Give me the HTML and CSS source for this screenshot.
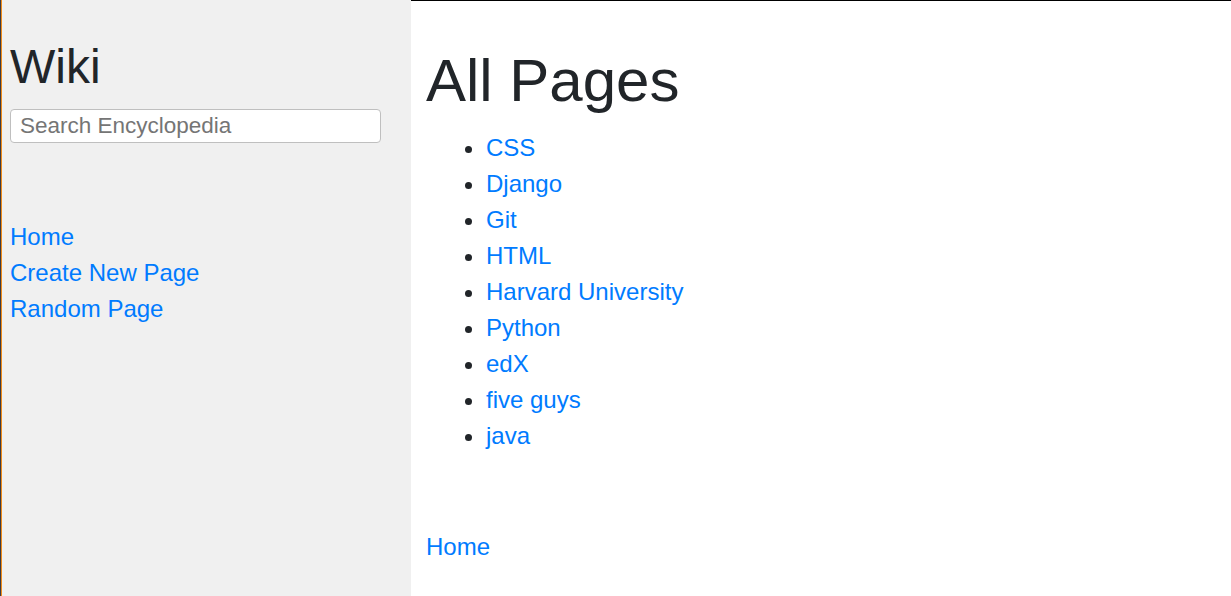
FILE: index.html
```
<!DOCTYPE html>
<html lang="en">
<head>
<meta charset="utf-8">
<title>Encyclopedia</title>
<link rel="stylesheet" href="styles.css">
</head>
<body>
<div class="frame">
  <div class="sidebar">
    <h2 class="brand">Wiki</h2>
    <form class="search-form">
      <input class="search" type="text" name="q" placeholder="Search Encyclopedia">
    </form>
    <div class="nav">
      <div><a href="#">Home</a></div>
      <div><a href="#">Create New Page</a></div>
      <div><a href="#">Random Page</a></div>
    </div>
  </div>
  <div class="main">
    <h1 class="title">All Pages</h1>
    <ul class="pages">
      <li><a href="#">CSS</a></li>
      <li><a href="#">Django</a></li>
      <li><a href="#">Git</a></li>
      <li><a href="#">HTML</a></li>
      <li><a href="#">Harvard University</a></li>
      <li><a href="#">Python</a></li>
      <li><a href="#">edX</a></li>
      <li><a href="#">five guys</a></li>
      <li><a href="#">java</a></li>
    </ul>
    <div class="footer-nav"><a href="#">Home</a></div>
  </div>
</div>
</body>
</html>
```
FILE: styles.css
```
html, body {
  margin: 0;
  padding: 0;
  height: 100%;
}
body {
  font-family: "Liberation Sans", Arial, sans-serif;
  font-size: 24px;
  line-height: 36px;
  color: #212529;
  background: #ffffff;
}
a {
  color: #007bff;
  text-decoration: none;
}
.frame {
  display: flex;
  height: 100vh;
  border-left: 1px solid #3c3c44;
  box-sizing: border-box;
}
.sidebar {
  box-sizing: border-box;
  width: 410px;
  flex: 0 0 410px;
  background: #f0f0f0;
  border-left: 1px solid #f08c1a;
  padding: 38px 30px 0 8px;
}
.brand {
  margin: 0 0 13px 0;
  font-size: 48px;
  font-weight: 400;
  line-height: 57.6px;
}
.search-form {
  margin: 0;
}
.search {
  box-sizing: border-box;
  display: block;
  width: 100%;
  height: 34px;
  margin: 0;
  padding: 1px 9px 0 9px;
  font-family: "Liberation Sans", Arial, sans-serif;
  font-size: 22.5px;
  line-height: 22.5px;
  color: #212529;
  background: #ffffff;
  border: 1px solid #bfbfbf;
  border-radius: 4px;
  outline: none;
}
.search::placeholder {
  color: #757575;
}
.nav {
  margin-top: 76px;
}
.main {
  flex: 1 1 auto;
  border-top: 1px solid #000000;
  padding: 44px 15px 0 15px;
}
.title {
  margin: 0 0 13px 0;
  font-size: 60px;
  font-weight: 400;
  line-height: 72px;
}
.pages {
  margin: 0;
  padding-left: 60px;
}
.footer-nav {
  margin-top: 75px;
}
```
